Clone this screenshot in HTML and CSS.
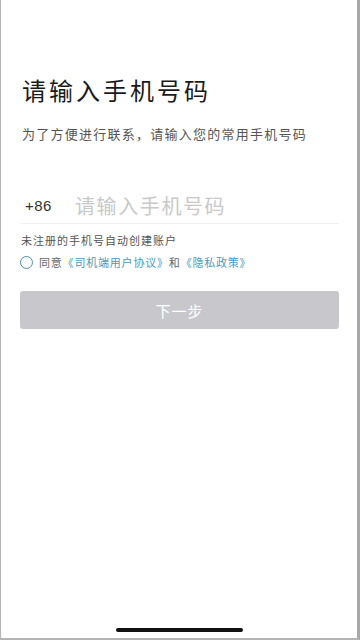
FILE: index.html
```html
<!DOCTYPE html>
<html lang="zh-CN">
<head>
    <meta charset="UTF-8">
    <meta name="viewport" content="width=device-width, initial-scale=1.0">
    <title>登录</title>
    <link rel="stylesheet" href="styles.css">
</head>
<body>
    <div class="screen">
        <div class="login">
            <h1 class="title">请输入手机号码</h1>
            <p class="subtitle">为了方便进行联系，请输入您的常用手机号码</p>

            <div class="phone-row">
                <span class="prefix">+86</span>
                <input type="tel" class="phone-input" placeholder="请输入手机号码">
            </div>
            <p class="hint">未注册的手机号自动创建账户</p>

            <div class="agree">
                <span class="radio"></span>
                <span>同意</span>
                <a class="link">《司机端用户协议》</a>
                <span>和</span>
                <a class="link">《隐私政策》</a>
            </div>

            <button class="next-btn">下一步</button>
        </div>
        <div class="home-bar"></div>
    </div>
</body>
</html>
```

FILE: styles.css
```css
* {
    box-sizing: border-box;
}
body {
    margin: 0;
    background: #fff;
    font-family: "Noto Sans CJK SC", "Noto Sans", sans-serif;
}
.screen {
    width: 360px;
    height: 640px;
    border-left: 1px solid #b4b4b4;
    border-right: 3px solid #a8a8a8;
    border-bottom: 2px solid #b4b4b4;
    display: flex;
    flex-direction: column;
    justify-content: space-between;
}
.login {
    padding: 72px 18px 0 19px;
}
.title {
    margin: 0;
    padding-left: 2px;
    font-size: 24px;
    font-weight: 400;
    letter-spacing: 3px;
    line-height: 36px;
    color: #1a1a1a;
}
.subtitle {
    margin: 17px 0 0;
    padding-left: 2px;
    font-size: 13px;
    letter-spacing: 1.25px;
    line-height: 18px;
    color: #555;
}
.phone-row {
    margin-top: 45px;
    display: flex;
    align-items: center;
    height: 36px;
    border-bottom: 1px solid #f0f0f0;
}
.prefix {
    width: 55px;
    padding-left: 5px;
    font-family: "Liberation Sans", sans-serif;
    font-size: 15px;
    letter-spacing: 0.5px;
    color: #333;
}
.phone-input {
    flex: 1;
    min-width: 0;
    border: none;
    outline: none;
    padding: 0;
    font-family: inherit;
    font-size: 20px;
    letter-spacing: 1.6px;
    color: #333;
    background: transparent;
}
.phone-input::placeholder {
    color: #c9c9c9;
}
.hint {
    margin: 8px 0 0;
    padding-left: 1px;
    font-size: 11px;
    letter-spacing: 1px;
    line-height: 16px;
    color: #555;
}
.agree {
    margin-top: 6px;
    display: flex;
    align-items: center;
    font-size: 11px;
    letter-spacing: 0.8px;
    line-height: 16px;
    color: #666;
}
.radio {
    width: 13px;
    height: 13px;
    border: 1.5px solid #4b8fb0;
    border-radius: 50%;
    margin-right: 6px;
}
.link {
    color: #4a9ac0;
}
.next-btn {
    margin-top: 21px;
    width: 100%;
    height: 38px;
    border: none;
    border-radius: 3px;
    background: #c8c8cc;
    color: #fff;
    font-family: inherit;
    font-size: 15px;
    letter-spacing: 1px;
}
.home-bar {
    align-self: center;
    width: 127px;
    height: 4px;
    border-radius: 2px;
    background: #111;
    margin-bottom: 6px;
}
```
